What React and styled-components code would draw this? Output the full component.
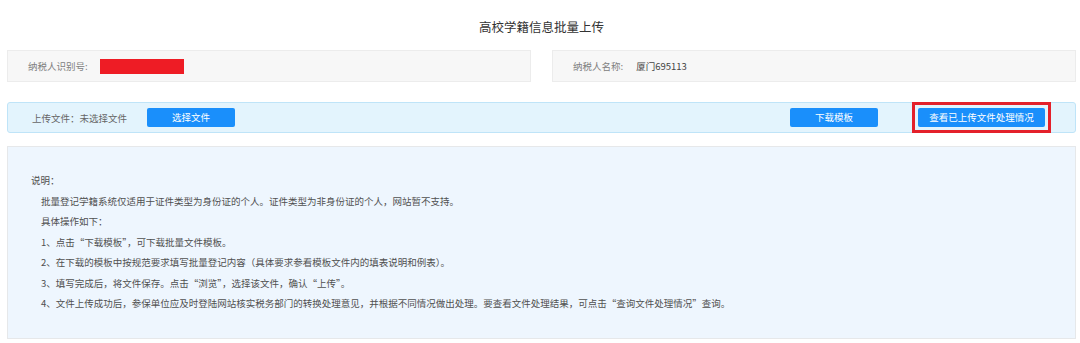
import React from "react";
import styled, { createGlobalStyle } from "styled-components";

const Global = createGlobalStyle`
  html, body { margin: 0; padding: 0; background: #fff; }
  body { font-family: "Noto Sans CJK SC", "Microsoft YaHei", sans-serif; }
  * { box-sizing: border-box; }
`;

const Page = styled.div`
  width: 1080px;
  padding: 0 4px 0 7px;
`;

const Title = styled.h1`
  margin: 0;
  height: 50px;
  padding-top: 20px;
  font-size: 12.5px;
  line-height: 14px;
  font-weight: normal;
  color: #333;
  text-align: center;
`;

const InfoRow = styled.div`
  display: grid;
  grid-template-columns: 1fr 1fr;
  column-gap: 21px;
`;

const InfoBox = styled.div`
  height: 32px;
  display: flex;
  align-items: center;
  gap: ${(p) => p.$gap}px;
  padding-left: 20px;
  background: #f7f7f7;
  border: 1px solid #ececec;
  font-size: 9.5px;
`;

const Label = styled.span`
  color: #808080;
`;

const Value = styled.span`
  color: #444;
`;

const Masked = styled.span`
  display: block;
  width: 84px;
  height: 15px;
  background: #ee1c25;
`;

const UploadBar = styled.div`
  margin-top: 20px;
  height: 31px;
  display: flex;
  align-items: center;
  padding: 0 24px 0 24px;
  background: #e3f4fd;
  border: 1px solid #bfe4f8;
  border-radius: 3px;
  font-size: 9.5px;
`;

const UploadText = styled.span`
  color: #666;
  margin-right: 20px;
`;

const Spacer = styled.div`
  flex: 1;
`;

const Button = styled.button`
  display: block;
  height: 19px;
  width: ${(p) => p.$w}px;
  padding: 0;
  border: none;
  border-radius: 2px;
  background: #1a8ffb;
  color: #fff;
  font-family: inherit;
  font-size: 9.5px;
  line-height: 19px;
`;

const Highlight = styled.span`
  display: inline-flex;
  margin-left: 34px;
  padding: 3px;
  border: 3px solid #e4202a;
`;

const Notice = styled.div`
  margin-top: 13px;
  height: 193px;
  padding: 23px 0 0 23px;
  background: #eef6fe;
  border: 1px solid #e6e8ea;
  font-size: 9.5px;
  color: #505050;
`;

const Line = styled.p`
  margin: 0;
  line-height: 20.5px;
  padding-left: ${(p) => (p.$indent ? 10 : 0)}px;
`;

const lines = [
  "批量登记学籍系统仅适用于证件类型为身份证的个人。证件类型为非身份证的个人，网站暂不支持。",
  "具体操作如下：",
  "1、点击“下载模板”，可下载批量文件模板。",
  "2、在下载的模板中按规范要求填写批量登记内容（具体要求参看模板文件内的填表说明和例表）。",
  "3、填写完成后，将文件保存。点击“浏览”，选择该文件，确认“上传”。",
  "4、文件上传成功后，参保单位应及时登陆网站核实税务部门的转换处理意见，并根据不同情况做出处理。要查看文件处理结果，可点击“查询文件处理情况”查询。",
];

export default function App() {
  return (
    <>
      <Global />
      <Page>
        <Title>高校学籍信息批量上传</Title>
        <InfoRow>
          <InfoBox $gap={12}>
            <Label>纳税人识别号:</Label>
            <Masked />
          </InfoBox>
          <InfoBox $gap={13}>
            <Label>纳税人名称:</Label>
            <Value>厦门695113</Value>
          </InfoBox>
        </InfoRow>
        <UploadBar>
          <UploadText>上传文件：未选择文件</UploadText>
          <Button $w={88}>选择文件</Button>
          <Spacer />
          <Button $w={88}>下载模板</Button>
          <Highlight>
            <Button $w={127}>查看已上传文件处理情况</Button>
          </Highlight>
        </UploadBar>
        <Notice>
          <Line>说明：</Line>
          {lines.map((t) => (
            <Line key={t} $indent>
              {t}
            </Line>
          ))}
        </Notice>
      </Page>
    </>
  );
}
